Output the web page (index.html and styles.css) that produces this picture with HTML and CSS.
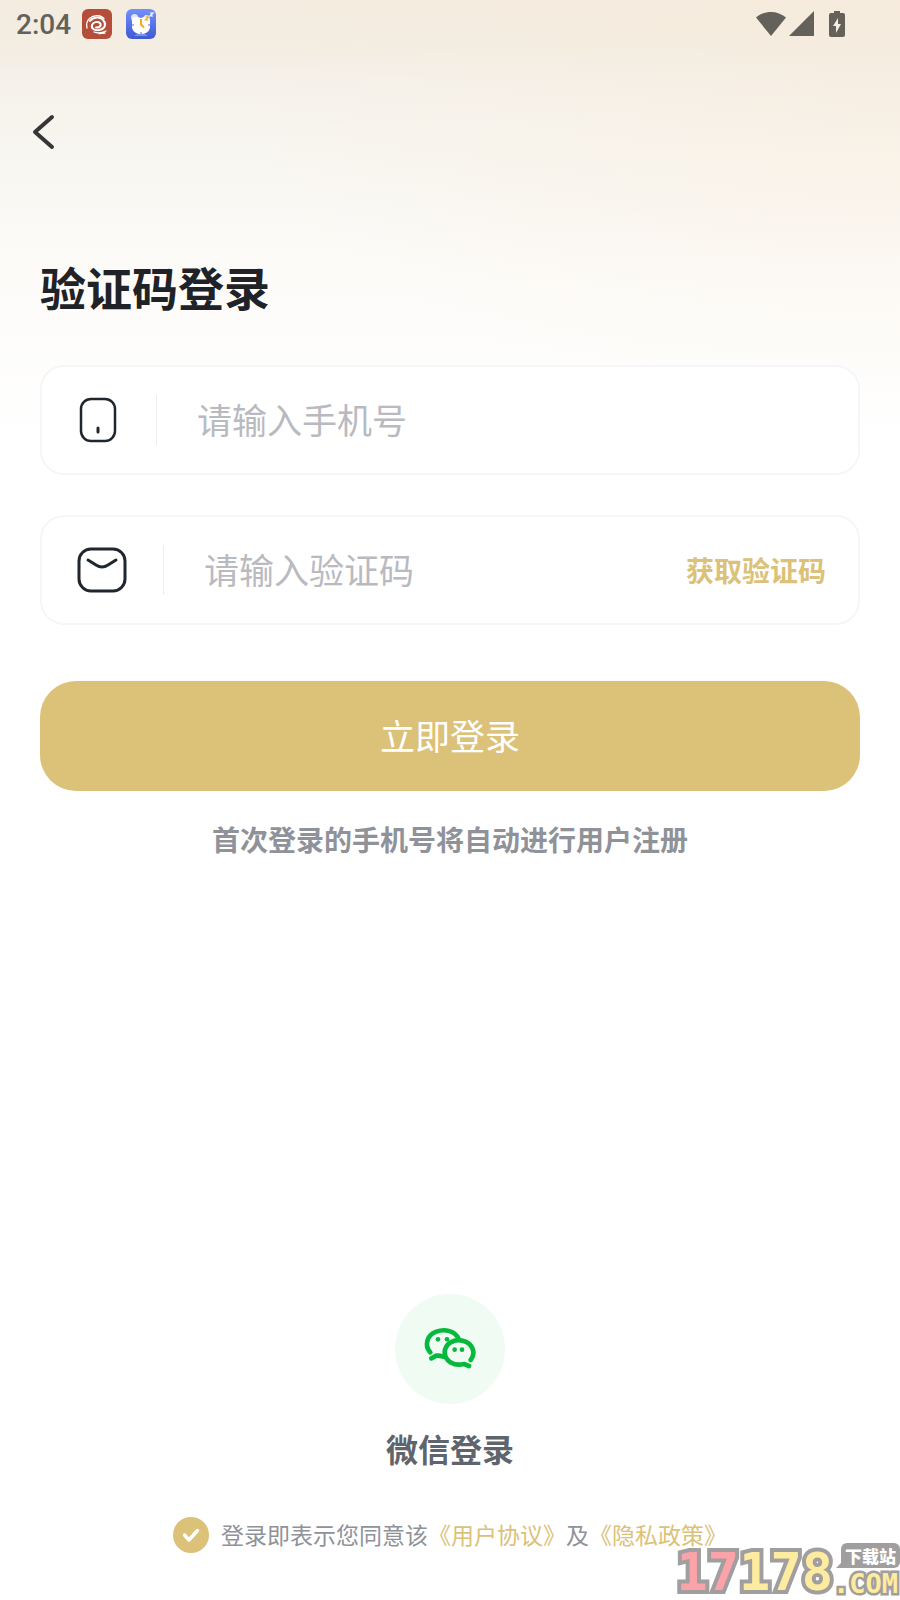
FILE: index.html
```html
<!DOCTYPE html>
<html lang="zh-CN">
<head>
    <meta charset="UTF-8">
    <meta name="viewport" content="width=device-width, initial-scale=1.0">
    <title>验证码登录</title>
    <link rel="stylesheet" href="styles.css">
</head>
<body>
    <div class="status-bar">
        <div class="status-left">
            <span class="time">2:04</span>
            <svg class="app-icon" viewBox="0 0 30 30">
                <rect width="30" height="30" rx="6" fill="#b44e3b"/>
                <g fill="none" stroke="#fff" stroke-linecap="round">
                    <path d="M5 19C3 11 10 5 18 7c2 .5 3 1.500 4 2.500" stroke-width="1.300"/>
                    <path d="M8 12c3-4 10-5 13-1 4 4 2 9-4 10-5 .8-8-2-7-5 1-3 6-4 8-2 2 3-1 5-4 4.500" stroke-width="2"/>
                    <path d="M12 23c4 1.500 8 1 12-1M17 24.500l6-.5" stroke-width="1.300"/>
                </g>
            </svg>
            <svg class="app-icon" viewBox="0 0 30 30">
                <defs>
                    <linearGradient id="clock-bg" x2="0" y2="1">
                        <stop stop-color="#7490fb"/>
                        <stop offset="1" stop-color="#3e59d3"/>
                    </linearGradient>
                </defs>
                <rect width="30" height="30" rx="6" fill="url(#clock-bg)"/>
                <path d="M8 27l3-2h8l3 2z" fill="#7890ec"/>
                <circle cx="8.500" cy="8.500" r="3.500" fill="#dfe5ff"/>
                <circle cx="20.500" cy="9" r="3" fill="#dfe5ff"/>
                <path d="M6 10q2-3 6-2l3 1 3-1q5-1 6 3v8q-2 6-9 6t-9-6z" fill="#fff"/>
                <path d="M15 10v5.500l3 3" fill="none" stroke="#efac16" stroke-width="2"/>
                <path d="M19.500 8h3l-3 3h3" fill="none" stroke="#efac16" stroke-width="1.200"/>
                <path d="M24 4h3l-3 3h3" fill="none" stroke="#fff" stroke-width="1.200"/>
                <path d="M6 16h2M22 16h2M15 23v2" stroke="#526de0"/>
            </svg>
        </div>
        <div class="status-right">
            <svg width="30" height="26" viewBox="0 0 30 26">
                <path d="M0 6.500C8.500-1 21.500-1 30 6.500L15 25z" fill="#64605a"/>
            </svg>
            <svg width="25" height="26" viewBox="0 0 25 26">
                <path d="M25 0v25H0z" fill="#64605a"/>
            </svg>
            <svg class="battery" width="16" height="26" viewBox="0 0 16 26">
                <path d="M5 0h6v2h3q2 0 2 2v20q0 2-2 2H2q-2 0-2-2V4q0-2 2-2h3z" fill="#64605a"/>
                <path d="M9 7l-5 8h3v7l5-9H9z" fill="#f6eee3"/>
            </svg>
        </div>
    </div>

    <button class="back-btn" type="button" aria-label="返回">
        <svg width="24" height="36" viewBox="0 0 24 36">
            <path d="M20 3L3 18l17 15" fill="none" stroke="#363636" stroke-width="4" stroke-linecap="round" stroke-linejoin="round"/>
        </svg>
    </button>

    <main>
        <h1>验证码登录</h1>

        <form class="login-form">
            <div class="field">
                <svg width="44" height="50" viewBox="0 0 44 50">
                    <rect x="5" y="4" width="34" height="42" rx="10" fill="none" stroke="#20262e" stroke-width="2.500"/>
                    <path d="M22 33v4" stroke="#20262e" stroke-width="3" stroke-linecap="round"/>
                </svg>
                <input type="tel" id="phone" placeholder="请输入手机号" aria-label="手机号">
            </div>

            <div class="field">
                <svg width="51" height="50" viewBox="0 0 51 50">
                    <rect x="3" y="4" width="46" height="42" rx="12" fill="none" stroke="#20262e" stroke-width="3"/>
                    <path d="M12 15l8 5q6 4 12 0l8-5" fill="none" stroke="#20262e" stroke-width="3" stroke-linecap="round"/>
                </svg>
                <input type="text" id="code" placeholder="请输入验证码" aria-label="验证码">
                <button class="code-btn" type="button">获取验证码</button>
            </div>

            <button class="login-btn" type="button">立即登录</button>
        </form>

        <p class="hint">首次登录的手机号将自动进行用户注册</p>
    </main>

    <footer>
        <button class="wechat-btn" type="button">
            <span class="wechat-circle">
                <svg width="54" height="44" viewBox="130 137 162 132">
                    <g fill="none" stroke="#06b93d" stroke-width="14" stroke-linecap="round" stroke-linejoin="round">
                        <path d="M152 216C134 197 140 165 170 154C197 144 226 153 236 174"/>
                        <path d="M155 234L170 226Q180 225 190 229"/>
                        <path d="M273 239C290 218 279 188 249 181C222 175 196 190 195 216C196 243 223 258 253 251L268 257"/>
                    </g>
                    <g fill="#06b93d">
                        <circle cx="175" cy="177" r="7"/>
                        <circle cx="202" cy="177" r="7"/>
                        <circle cx="225" cy="208" r="7"/>
                        <circle cx="247" cy="208" r="7"/>
                    </g>
                </svg>
            </span>
            微信登录
        </button>

        <div class="agreement">
            <input type="checkbox" id="agree" checked>
            <p><label for="agree">登录即表示您同意该</label><a href="#">《用户协议》</a>及<a href="#">《隐私政策》</a></p>
        </div>
    </footer>

    <div class="watermark">
        <div class="mark-number"><span>17</span>178</div>
        <div class="mark-side">
            <div class="mark-bubble">下载站</div>
            <div class="mark-com">.COM</div>
        </div>
    </div>
</body>
</html>
```
FILE: styles.css
```css
* {
    box-sizing: border-box;
}

body {
    margin: 0;
    min-height: 100vh;
    display: flex;
    flex-direction: column;
    position: relative;
    font-family: "Noto Sans CJK SC", sans-serif;
    color: #1f2226;
    background:
        radial-gradient(ellipse 640px 300px at 100% 110px, rgba(250, 232, 212, 0.35), rgba(250, 236, 220, 0)),
        linear-gradient(#f4ebdf, #f3eee3 50px, #f5f1ea 80px, #f8f6f0 150px, #faf9f5 220px, #fdfcfa 300px, #fff 450px);
    background-color: #fff;
    background-repeat: no-repeat;
}

h1, p {
    margin: 0;
}

button {
    font-family: inherit;
    border: none;
    background: none;
    padding: 0;
    cursor: pointer;
}

svg {
    display: block;
    flex-shrink: 0;
}

.status-bar {
    display: flex;
    justify-content: space-between;
    align-items: center;
    height: 48px;
    padding: 0 55px 0 16px;
}

.status-left, .status-right {
    display: flex;
    align-items: center;
}

.time {
    font-family: Roboto, sans-serif;
    font-size: 28px;
    font-weight: 500;
    color: #64605a;
    margin-right: 11px;
}

.app-icon {
    width: 30px;
    height: 30px;
    margin-right: 14px;
}

.status-right {
    gap: 3px;
}

.battery {
    margin-left: 12px;
}

.back-btn {
    align-self: flex-start;
    margin: 66px 0 0 32px;
}

main {
    padding: 0 40px;
}

h1 {
    margin-top: 102px;
    font-size: 46px;
    line-height: 68px;
    font-weight: 700;
}

.login-form {
    margin-top: 45px;
    display: flex;
    flex-direction: column;
    gap: 40px;
}

.field {
    display: flex;
    align-items: center;
    height: 110px;
    padding: 0 32px 0 34px;
    border: 2px solid #f5f6f8;
    border-radius: 24px;
    background: #fff;
}

.field input {
    flex: 1;
    min-width: 0;
    height: 50px;
    margin-left: 36px;
    padding: 0 0 4px 40px;
    border: none;
    border-left: 1px solid #ededf0;
    outline: none;
    background: none;
    font-family: inherit;
    font-size: 35px;
    color: #1f2226;
}

.field input::placeholder {
    color: #b9bac0;
    opacity: 1;
}

.code-btn {
    font-size: 28px;
    font-weight: 700;
    color: #dcc178;
}

.login-btn {
    height: 110px;
    margin-top: 16px;
    padding-bottom: 4px;
    border-radius: 36px;
    background: #dcc178;
    color: #fff;
    font-size: 35px;
}

.hint {
    margin-top: 27px;
    font-size: 28px;
    line-height: 42px;
    font-weight: 700;
    text-align: center;
    color: #8f9299;
}

footer {
    margin-top: auto;
    padding: 40px 20px 47px;
    display: flex;
    flex-direction: column;
    align-items: center;
    gap: 45px;
}

.wechat-btn {
    display: flex;
    flex-direction: column;
    align-items: center;
    gap: 20px;
    font-size: 32px;
    line-height: 48px;
    font-weight: 700;
    color: #5f656d;
}

.wechat-circle {
    width: 110px;
    height: 110px;
    display: flex;
    align-items: center;
    justify-content: center;
    border-radius: 50%;
    background: #f0fbf4;
}

.wechat-circle svg {
    margin-bottom: 2px;
}

.agreement {
    display: flex;
    align-items: center;
    gap: 12px;
    font-size: 23px;
    line-height: 34px;
    color: #8f9299;
}

.agreement p {
    padding-bottom: 2px;
}

.agreement input {
    appearance: none;
    flex-shrink: 0;
    width: 36px;
    height: 36px;
    margin: 0;
    border: 2px solid #dcc178;
    border-radius: 50%;
}

.agreement input:checked {
    border: none;
    background: #dcc178 url("data:image/svg+xml,%3Csvg xmlns='http://www.w3.org/2000/svg' viewBox='0 0 36 36'%3E%3Cpath d='M11.500 18l4.500 5 8.500-9.500' fill='none' stroke='white' stroke-width='3.500' stroke-linecap='round' stroke-linejoin='round'/%3E%3C/svg%3E");
}

.agreement a {
    color: #dcc178;
    text-decoration: none;
}

.watermark {
    position: absolute;
    right: 0;
    bottom: 0;
    display: flex;
    align-items: flex-end;
    pointer-events: none;
}

.mark-number {
    font-family: "DejaVu Sans Mono", monospace;
    font-size: 52px;
    line-height: 56px;
    font-weight: 700;
    color: #fdeb9f;
    -webkit-text-stroke: 8px #a09e9e;
    paint-order: stroke fill;
}

.mark-number span {
    color: #fca3aa;
}

.mark-bubble {
    position: relative;
    margin-left: 8px;
    padding: 0 4px;
    border-radius: 6px;
    background: #a09e9e;
    color: #fff;
    font-size: 17px;
    line-height: 25px;
    font-weight: 900;
}

.mark-bubble::before {
    content: "";
    position: absolute;
    left: -5px;
    bottom: 0;
    border: solid transparent;
    border-width: 0 0 12px 12px;
    border-bottom-color: #a09e9e;
}

.mark-com {
    font-family: "DejaVu Sans Mono", monospace;
    font-size: 27px;
    line-height: 32px;
    font-weight: 700;
    color: #fdeb9f;
    -webkit-text-stroke: 5px #a09e9e;
    paint-order: stroke fill;
}
```
